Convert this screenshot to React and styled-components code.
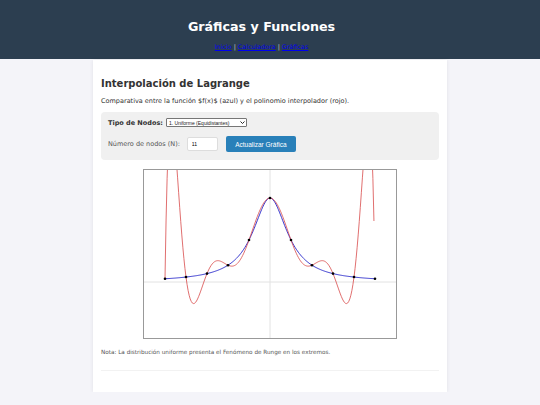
import React from "react";
import styled, { createGlobalStyle } from "styled-components";

const Global = createGlobalStyle`
  html, body { margin: 0; padding: 0; }
  body {
    background: #f4f4f9;
    font-family: "DejaVu Sans", Verdana, sans-serif;
    color: #333;
  }
`;

const Header = styled.header`
  background: #2c3e50;
  color: #fff;
  height: 59px;
  box-sizing: border-box;
  padding: 18px 17px 0 0;
  text-align: center;
`;

const SiteTitle = styled.h1`
  margin: 0;
  font-size: 12.7px;
  font-weight: bold;
  line-height: 18px;
`;

const Nav = styled.nav`
  margin-top: 6px;
  font-size: 6.4px;
  line-height: 10px;
  color: #ccc;
  a { color: #0000ee; text-decoration: underline; }
`;

const Card = styled.main`
  width: 354px;
  box-sizing: border-box;
  margin: 1px auto 0;
  background: #fff;
  padding: 17px 8px 21px;
  box-shadow: 0 0 4px rgba(0, 0, 0, 0.08);
`;

const Title = styled.h2`
  margin: 0;
  font-size: 10px;
  line-height: 14px;
  font-weight: bold;
  color: #333;
`;

const Lead = styled.p`
  margin: 6px 0 0;
  font-size: 6.5px;
  line-height: 9px;
`;

const Controls = styled.div`
  margin-top: 6px;
  background: #f0f0f0;
  border-radius: 4px;
  padding: 6px 7px 8px;
  display: flex;
  flex-direction: column;
  gap: 9px;
`;

const Row = styled.div`
  display: flex;
  align-items: center;
  gap: 3px;
  font-size: 6.5px;
`;

const Label = styled.label`
  font-weight: ${(p) => (p.$bold ? "bold" : "normal")};
  color: ${(p) => (p.$bold ? "#333" : "#555")};
`;

const SelectBox = styled.span`
  position: relative;
  display: inline-flex;
`;

const Select = styled.select`
  appearance: none;
  font-family: "Liberation Sans", Arial, sans-serif;
  font-size: 5px;
  height: 9px;
  width: 81px;
  padding: 0 8px 0 2px;
  border: 1px solid #767676;
  border-radius: 1px;
  background: #fff;
  color: #222;
`;

const Chevron = styled.svg`
  position: absolute;
  right: 2px;
  top: 3px;
  pointer-events: none;
`;

const Input = styled.input`
  font-family: "Liberation Sans", Arial, sans-serif;
  font-size: 5px;
  width: 31px;
  height: 14px;
  box-sizing: border-box;
  border: 1px solid #ddd;
  border-radius: 2px;
  padding: 0 4px;
  margin-left: 4px;
`;

const Button = styled.button`
  font-family: "Liberation Sans", Arial, sans-serif;
  font-size: 6.5px;
  width: 70px;
  height: 16px;
  border: none;
  border-radius: 2px;
  background: #2980b9;
  color: #fff;
  margin-left: 5px;
  padding: 0;
`;

const ChartWrap = styled.div`
  display: flex;
  justify-content: center;
  margin-top: 9px;
`;

const Chart = styled.svg`
  display: block;
  border: 1px solid #999;
  background: #fff;
`;

const Note = styled.p`
  margin: 9px 0 0;
  font-size: 5.7px;
  line-height: 8px;
  color: #555;
`;

const Rule = styled.hr`
  margin: 14px 0 0;
  border: none;
  border-top: 1px solid #f2f2f2;
`;

const W = 252;
const H = 168;
const sx = (x) => (x + 1.2) * (W / 2.4);
const sy = (y) => (4 / 3 - y) * (H / 2);
const f = (x) => 1 / (1 + 25 * x * x);
const nodes = Array.from({ length: 11 }, (_, i) => -1 + 0.2 * i);
const lag = (x) => {
  let s = 0;
  for (let i = 0; i < nodes.length; i++) {
    let l = 1;
    for (let j = 0; j < nodes.length; j++) {
      if (j !== i) l *= (x - nodes[j]) / (nodes[i] - nodes[j]);
    }
    s += f(nodes[i]) * l;
  }
  return s;
};
const path = (fn, n) => {
  const pts = [];
  for (let i = 0; i <= n; i++) {
    const x = -1 + i * 0.01;
    let y = fn(x);
    if (y > 5) y = 5;
    if (y < -5) y = -5;
    pts.push(`${sx(x).toFixed(2)},${sy(y).toFixed(2)}`);
  }
  return "M" + pts.join("L");
};

export default function App() {
  return (
    <>
      <Global />
      <Header>
        <SiteTitle>Gráficas y Funciones</SiteTitle>
        <Nav>
          <a href="#">Inicio</a> | <a href="#">Calculadora</a> | <a href="#">Gráficas</a>
        </Nav>
      </Header>
      <Card>
        <Title>Interpolación de Lagrange</Title>
        <Lead>Comparativa entre la función $f(x)$ (azul) y el polinomio interpolador (rojo).</Lead>
        <Controls>
          <Row>
            <Label $bold>Tipo de Nodos:</Label>
            <SelectBox>
              <Select defaultValue="u">
                <option value="u">1. Uniforme (Equidistantes)</option>
                <option value="c">2. Chebyshev</option>
              </Select>
              <Chevron width="5" height="3" viewBox="0 0 5 3">
                <path d="M0.5 0.5 L2.5 2.5 L4.5 0.5" fill="none" stroke="#111" strokeWidth="0.9" />
              </Chevron>
            </SelectBox>
          </Row>
          <Row>
            <Label>Número de nodos (N):</Label>
            <Input defaultValue="11" />
            <Button>Actualizar Gráfica</Button>
          </Row>
        </Controls>
        <ChartWrap>
          <Chart width={W} height={H} viewBox={`0 0 ${W} ${H}`}>
            <line x1={sx(0)} y1={0} x2={sx(0)} y2={H} stroke="#e2e2e2" strokeWidth="1" />
            <line x1={0} y1={sy(0)} x2={W} y2={sy(0)} stroke="#e2e2e2" strokeWidth="1" />
            <path d={path(f, 200)} fill="none" stroke="#2323c8" strokeWidth="0.9" />
            <path d={path(lag, 199)} fill="none" stroke="#d84a4a" strokeWidth="0.8" />
            {nodes.map((x, i) => (
              <circle key={i} cx={sx(x)} cy={sy(f(x))} r="1.3" fill="#000" />
            ))}
          </Chart>
        </ChartWrap>
        <Note>Nota: La distribución uniforme presenta el Fenómeno de Runge en los extremos.</Note>
        <Rule />
      </Card>
    </>
  );
}
